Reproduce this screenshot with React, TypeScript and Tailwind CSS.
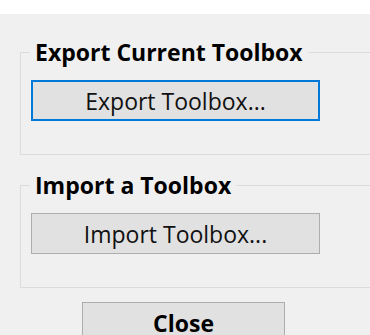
import React from "react";

const font = { fontFamily: '"Open Sans", "Noto Sans", sans-serif' };

function Group({ title, children, focused }: { title: string; children: string; focused?: boolean }) {
  return (
    <fieldset className="w-[370px] border border-[#dcdcdc] pl-[10px] pt-[16px] pb-[33px]">
      <legend className="ml-[-1px] px-[5px] text-[23px] leading-[24px] font-bold text-black">{title}</legend>
      <button
        className={
          "w-[289px] h-[41px] bg-[#e1e1e1] text-[23px] leading-[24px] text-[#111] flex items-center justify-center " +
          (focused ? "border-2 border-[#0078d7]" : "border border-[#adadad]")
        }
      >
        {children}
      </button>
    </fieldset>
  );
}

export default function App() {
  return (
    <div className="w-[370px] h-[335px] overflow-hidden bg-[#f0f0f0] flex flex-col" style={font}>
      <div className="h-[14px] bg-white shrink-0" />
      <div className="pl-[20px] pt-[26px] flex flex-col gap-[18px]">
        <Group title="Export Current Toolbox" focused>
          Export Toolbox...
        </Group>
        <Group title="Import a Toolbox">Import Toolbox...</Group>
      </div>
      <div className="pl-[82px] pt-[14px]">
        <button className="w-[203px] h-[41px] bg-[#e1e1e1] border border-[#adadad] text-[23px] leading-[24px] font-bold text-black flex items-center justify-center">
          Close
        </button>
      </div>
    </div>
  );
}
